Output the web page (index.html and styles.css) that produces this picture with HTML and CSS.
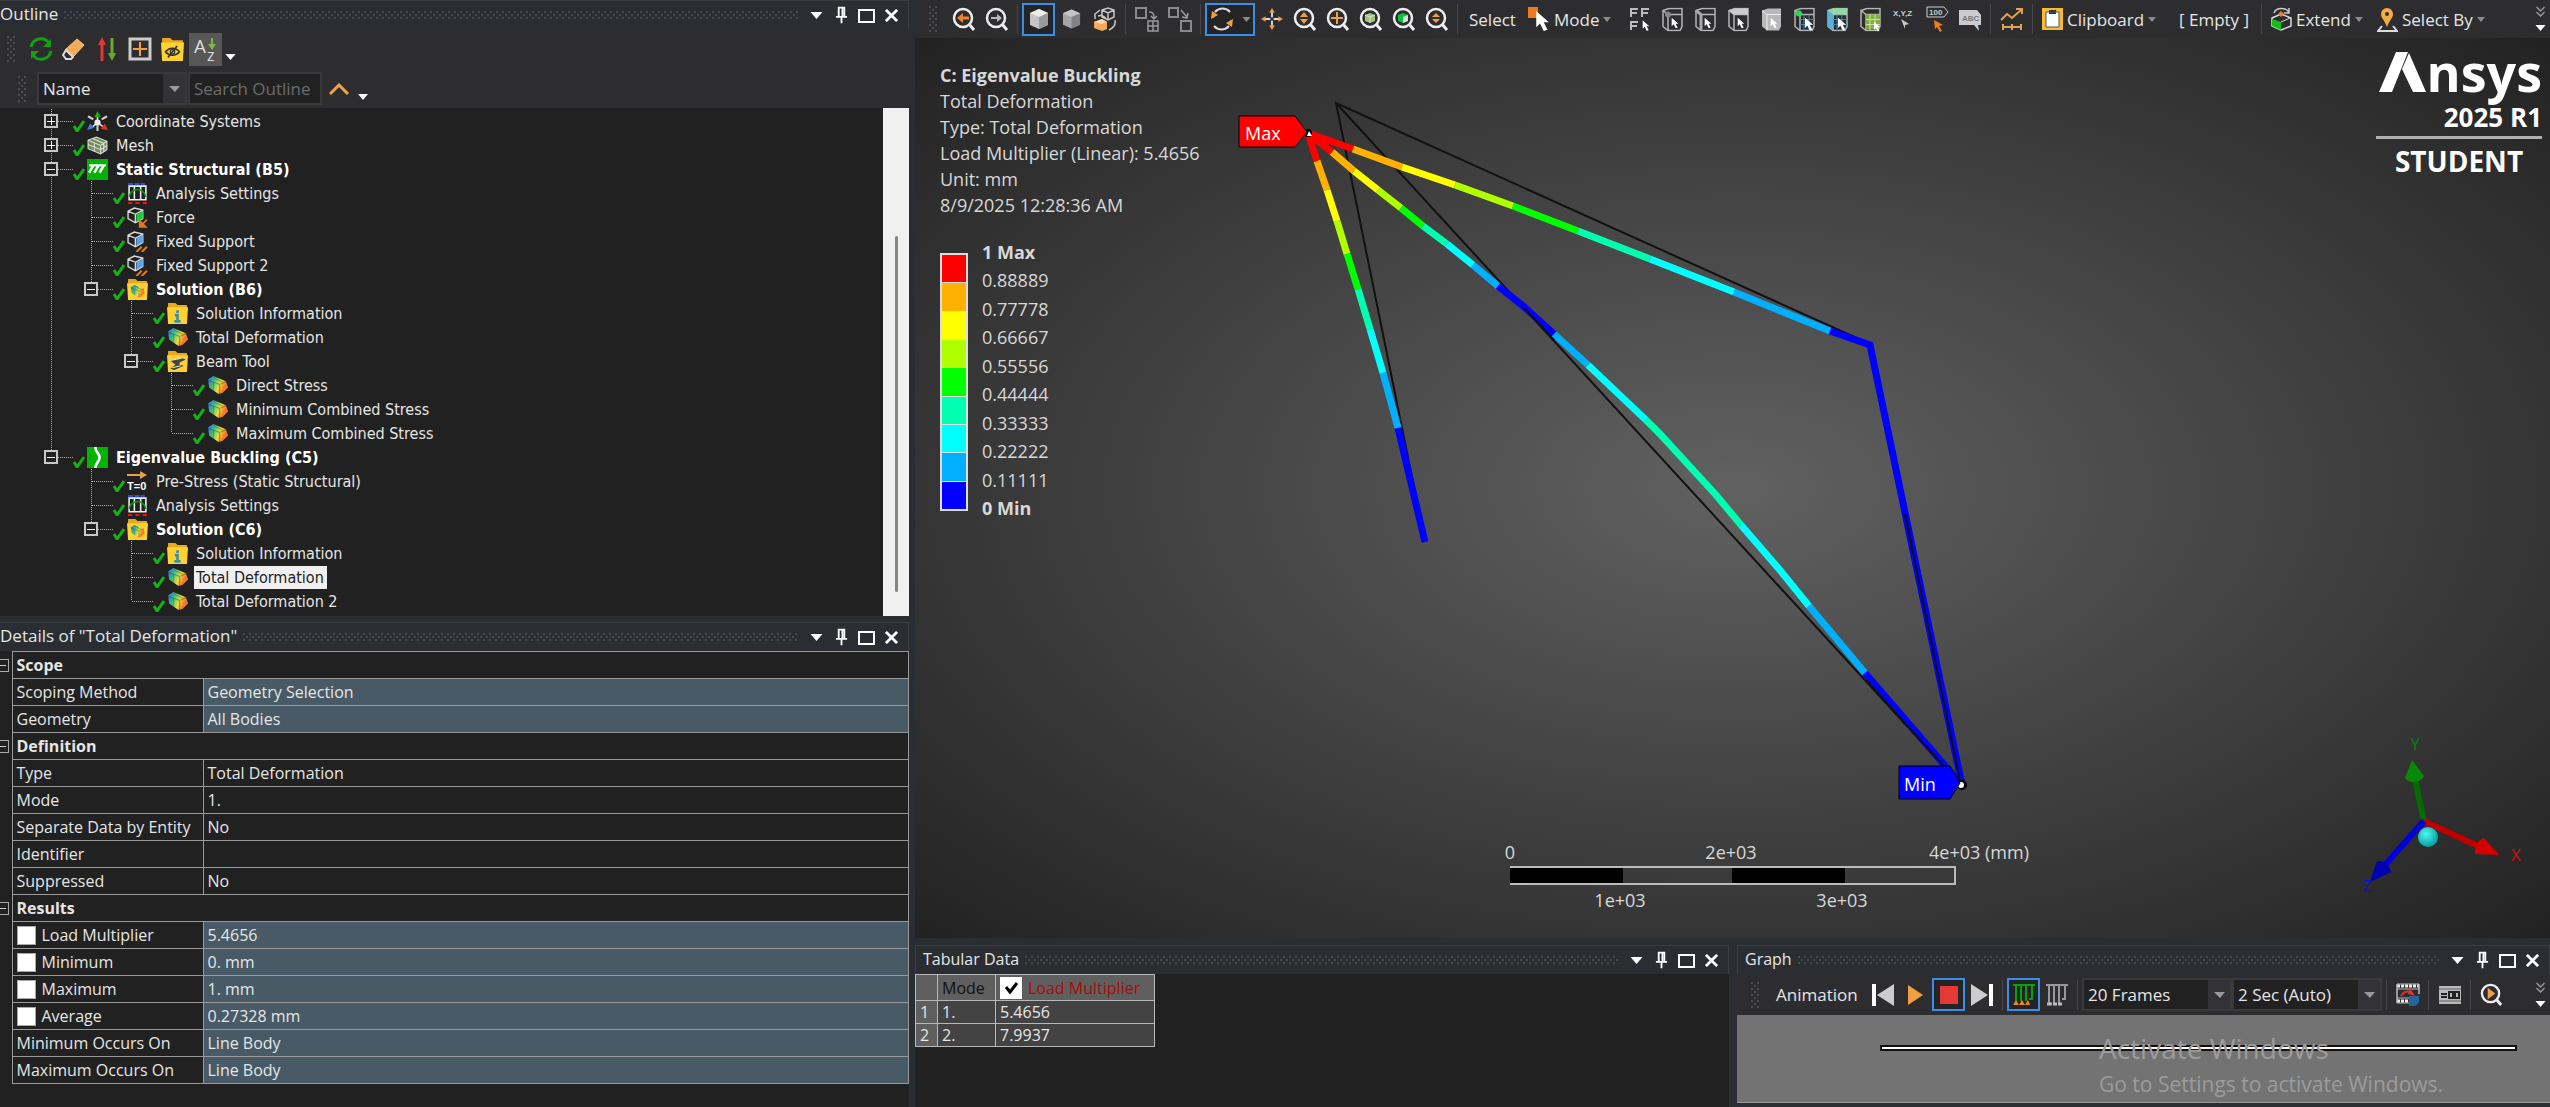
FILE: index.html
```html
<!DOCTYPE html>
<html lang="en">
<head>
  <meta charset="UTF-8">
  <title>Mechanical - Eigenvalue Buckling</title>
  <link rel="stylesheet" href="styles.css">
</head>
<body>
  <!-- shared icons -->
  <svg class="sprite" aria-hidden="true">
    <defs>
      <linearGradient id="rainbow" x1="0" y1="0.2" x2="1" y2="0.6">
        <stop offset="0.05" stop-color="#3579d8"/>
        <stop offset="0.3" stop-color="#3cc47a"/>
        <stop offset="0.6" stop-color="#f0dc3c"/>
        <stop offset="0.85" stop-color="#f5792e"/>
      </linearGradient>
      <radialGradient id="ball" cx="0.4" cy="0.35" r="0.7">
        <stop offset="0" stop-color="#4ff5f5"/>
        <stop offset="1" stop-color="#009a9a"/>
      </radialGradient>
    </defs>
    <symbol id="i-check" viewBox="0 0 12 13"><path d="M1 7l3 5 7-10" fill="none" stroke="#12b312" stroke-width="3"/></symbol>
    <symbol id="i-coord" viewBox="0 0 20 20"><path d="M10 11l7 5M10 11V4M10 11l-6 5" stroke="#ddd" stroke-width="1.5"/><path d="M10 0l3 6H7z" fill="#12b312"/><path d="M20 18l-7-1 4-5z" fill="#e03030"/><path d="M0 18l3-6 4 4z" fill="#3b82d0"/><path d="M1 5l5 3M19 5l-5 3M10 14v5" stroke="#ccc" stroke-width="2"/><circle cx="10" cy="11" r="3" fill="#eee"/></symbol>
    <symbol id="i-mesh" viewBox="0 0 20 20"><path d="M1 5l8-3 10 4v8l-6 4L1 13z" fill="#6f8f55" stroke="#ddd"/><path d="M1 5l12 5 6-4M13 10v8M5 3l11 5v8M7 8v8M1 9l12 5 6-4" fill="none" stroke="#ddd"/></symbol>
    <symbol id="i-static" viewBox="0 0 20 20"><path d="M0 0h20v20H0z" fill="#04b204"/><path d="M2 6h16" stroke="#fff" stroke-width="2"/><path d="M6 6l-4 7M11 6l-4 7M16 6l-4 7" stroke="#fff" stroke-width="2.5"/></symbol>
    <symbol id="i-buckle" viewBox="0 0 20 20"><path d="M0 0h20v20H0z" fill="#04b204"/><path d="M8 0c0 6 4 6 4 10s-4 5-4 10" fill="none" stroke="#fff" stroke-width="2.5"/></symbol>
    <symbol id="i-settings" viewBox="0 0 20 20"><path d="M2 3h16v13H2zM7 3v13M13 3v13" fill="none" stroke="#eee" stroke-width="1.5"/><path d="M2 13c3-9 13-9 16 0" fill="none" stroke="#0a9a0a" stroke-width="1.5"/><path d="M1 1h16" stroke="#2a4fd0" stroke-width="2" stroke-dasharray="5 1"/><path d="M1 19h18" stroke="#f01010" stroke-width="2" stroke-dasharray="4 3"/></symbol>
    <symbol id="i-force" viewBox="0 0 20 20"><path d="M1 4l6-3 8 2v8l-7 4-7-4zM1 4l7 3 7-4M8 7v8" fill="none" stroke="#ddd" stroke-width="1.3"/><path d="M9 7l6-3v7l-6 3z" fill="#12d032"/><path d="M19 12l-5 5M12 19v-6l6 6z" stroke="#e07820" stroke-width="1.5" fill="#e07820"/></symbol>
    <symbol id="i-fixed" viewBox="0 0 20 20"><path d="M1 4l6-3 8 2v8l-7 4-7-4zM1 4l7 3 7-4M8 7v8" fill="none" stroke="#ddd" stroke-width="1.3"/><path d="M9 7l6-3v7l-6 3z" fill="#5aa5e8"/><path d="M9 20l5-5M14 20l5-5" stroke="#e07820" stroke-width="2"/></symbol>
    <symbol id="i-folder" viewBox="0 0 20 20"><path d="M1 0h7l2 2h9v4H1z" fill="#e8a91e"/><path d="M0 4h20l-1 16H1z" fill="#fdd232"/></symbol>
    <symbol id="i-result" viewBox="0 0 20 20"><path d="M1 4l5-3 12 5 2 6-5 5-4 1-9-6z" fill="url(#rainbow)"/><path d="M1 5l11 4 7-3M12 9v9M6 7v8M6 2l9 5" fill="none" stroke="#1f3a2a" stroke-opacity="0.4"/></symbol>
    <symbol id="i-solution" viewBox="0 0 20 20"><use href="#i-folder"/><use href="#i-result" x="3" y="5" width="14" height="14"/></symbol>
    <symbol id="i-info" viewBox="0 0 20 20"><use href="#i-folder"/><path d="M10 7v2.500M7.500 11.500H10V17M7 17.500h6" fill="none" stroke="#3c8f9c" stroke-width="2.500"/></symbol>
    <symbol id="i-beam" viewBox="0 0 20 20"><use href="#i-folder"/><path d="M3 9l11-2 4 1-6 3v2l4 1-9 4-4-1 5-4z" fill="#444"/><path d="M3 9l11-2M5 16l8-2" stroke="#ddd"/></symbol>

    <symbol id="i-drop" viewBox="0 0 12 7"><path d="M0 0h12L6 7z" fill="#fff"/></symbol>
    <symbol id="i-caret" viewBox="0 0 8 5"><path d="M0 0h8L4 5z" fill="#8a8a8a"/></symbol>
    <symbol id="i-pin" viewBox="0 0 14 18"><path d="M4 1h6v10H4zM1 11h12M7 11v7" fill="none" stroke="#fff" stroke-width="2"/><path d="M8 1v10" stroke="#fff" stroke-width="2"/></symbol>
    <symbol id="i-max" viewBox="0 0 17 15"><path d="M1 2h15v12H1z" fill="none" stroke="#fff" stroke-width="2"/></symbol>
    <symbol id="i-close" viewBox="0 0 14 14"><path d="M1 1l12 12M13 1L1 13" stroke="#fff" stroke-width="3"/></symbol>
    <symbol id="i-more" viewBox="0 0 10 26"><path d="M1 1l4 4 4-4M1 6l4 4 4-4" fill="none" stroke="#999" stroke-width="1.500"/><path d="M0 19h10l-5 6z" fill="#fff"/></symbol>

    <symbol id="i-lens" viewBox="0 0 24 24"><circle cx="11" cy="11" r="9" fill="none" stroke="#eee" stroke-width="2.500"/><path d="M17 17l5 6" stroke="#eee" stroke-width="3"/></symbol>
    <symbol id="i-cube" viewBox="0 0 20 20"><path d="M1 4l9-4 9 4v12l-9 4-9-4z" fill="#c4c4c4"/><path d="M1 4l9-4 9 4-9 4z" fill="#ececec"/><path d="M10 8l9-4v12l-9 4z" fill="#999"/></symbol>
    <symbol id="i-cubesel" viewBox="0 0 24 24"><path d="M2 3l6-2h13v18l-2 4H7l-5-4z" fill="none" stroke="#b5b5b5" stroke-width="1.500"/><path d="M2 3l5 4h14M7 7v16" fill="none" stroke="#b5b5b5" stroke-width="1.500"/></symbol>
    <symbol id="i-arrow" viewBox="0 0 12 16"><path d="M1 0v13l3-3 3 6 3-1-3-6h4z" fill="#fff"/></symbol>
  </svg>

  <div class="app">
    <div class="side">
      <section class="outline">
        <header class="titlebar">
          <h2>Outline</h2><span class="dots"></span>
          <button aria-label="Menu"><svg width="13" height="7"><use href="#i-drop"/></svg></button>
          <button aria-label="Pin"><svg width="13" height="18"><use href="#i-pin"/></svg></button>
          <button aria-label="Maximize"><svg width="17" height="15"><use href="#i-max"/></svg></button>
          <button aria-label="Close"><svg width="13" height="13"><use href="#i-close"/></svg></button>
        </header>
        <div class="tools">
          <span class="grip"></span>
          <button aria-label="Refresh"><svg width="24" height="24" viewBox="0 0 24 24"><path d="M2 10a10 10 0 0 1 18-4M22 14a10 10 0 0 1-18 4" fill="none" stroke="#12a012" stroke-width="3"/><path d="M22 2v8h-8zM2 22v-8h8z" fill="#12a012"/></svg></button>
          <button aria-label="Clear"><svg width="24" height="24" viewBox="0 0 24 24"><path d="M15 2l7 6-11 12-8-7z" fill="#f3ab55" stroke="#f6c78c"/><path d="M4 13l7 7-2 2-5 0-3-4z" fill="none" stroke="#ddd" stroke-width="2"/></svg></button>
          <button aria-label="Sort"><svg width="20" height="24" viewBox="0 0 20 24"><path d="M5 24V6" stroke="#e23535" stroke-width="3"/><path d="M5 0l4 8H1z" fill="#e23535"/><path d="M15 1v17" stroke="#6aa832" stroke-width="3"/><path d="M15 24l4-8h-8z" fill="#6aa832"/></svg></button>
          <button aria-label="Expand all"><svg width="24" height="24" viewBox="0 0 24 24"><path d="M2 2h20v20H2z" fill="none" stroke="#ccc" stroke-width="3"/><path d="M12 5v14M5 12h14" stroke="#f0a040" stroke-width="2"/></svg></button>
          <button aria-label="Hide folders"><svg width="23" height="23" viewBox="0 0 20 20"><use href="#i-folder"/><path d="M4 12c3-4 9-4 12 0-3 4-9 4-12 0zM6 17l8-10" fill="none" stroke="#333" stroke-width="1.500"/><circle cx="10" cy="12" r="2" fill="none" stroke="#333"/></svg></button>
          <button class="sort-az" aria-label="Sort A to Z"><svg width="33" height="33" viewBox="0 0 33 33"><text x="5" y="20" class="az-a">A</text><text x="18" y="28" class="az-z">z</text><path d="M23 5v8" stroke="#7cb848" stroke-width="2"/><path d="M19 11h8l-4 6z" fill="#7cb848"/></svg></button>
          <button class="overflow" aria-label="More"><svg width="11" height="6"><use href="#i-drop"/></svg></button>
        </div>
        <div class="search">
          <span class="grip"></span>
          <select aria-label="Search by"><option>Name</option></select>
          <input type="text" placeholder="Search Outline" aria-label="Search Outline">
          <button aria-label="Collapse"><svg width="20" height="12" viewBox="0 0 20 12"><path d="M1 11l9-9 9 9" fill="none" stroke="#f0a445" stroke-width="3"/></svg></button>
          <button class="overflow" aria-label="More"><svg width="10" height="6"><use href="#i-drop"/></svg></button>
        </div>
        <div class="tree-box">
          <ul class="tree">
            <li><div class="row"><button class="toggle plus" aria-label="Expand"></button><svg class="check"><use href="#i-check"/></svg><svg class="icon"><use href="#i-coord"/></svg><span>Coordinate Systems</span></div></li>
            <li><div class="row"><button class="toggle plus" aria-label="Expand"></button><svg class="check"><use href="#i-check"/></svg><svg class="icon"><use href="#i-mesh"/></svg><span>Mesh</span></div></li>
            <li>
              <div class="row bold"><button class="toggle" aria-label="Collapse"></button><svg class="check"><use href="#i-check"/></svg><svg class="icon"><use href="#i-static"/></svg><span>Static Structural (B5)</span></div>
              <ul>
                <li><div class="row leaf"><svg class="check"><use href="#i-check"/></svg><svg class="icon"><use href="#i-settings"/></svg><span>Analysis Settings</span></div></li>
                <li><div class="row leaf"><svg class="check"><use href="#i-check"/></svg><svg class="icon"><use href="#i-force"/></svg><span>Force</span></div></li>
                <li><div class="row leaf"><svg class="check"><use href="#i-check"/></svg><svg class="icon"><use href="#i-fixed"/></svg><span>Fixed Support</span></div></li>
                <li><div class="row leaf"><svg class="check"><use href="#i-check"/></svg><svg class="icon"><use href="#i-fixed"/></svg><span>Fixed Support 2</span></div></li>
                <li>
                  <div class="row bold"><button class="toggle" aria-label="Collapse"></button><svg class="check"><use href="#i-check"/></svg><svg class="icon"><use href="#i-solution"/></svg><span>Solution (B6)</span></div>
                  <ul>
                    <li><div class="row leaf"><svg class="check"><use href="#i-check"/></svg><svg class="icon"><use href="#i-info"/></svg><span>Solution Information</span></div></li>
                    <li><div class="row leaf"><svg class="check"><use href="#i-check"/></svg><svg class="icon"><use href="#i-result"/></svg><span>Total Deformation</span></div></li>
                    <li>
                      <div class="row"><button class="toggle" aria-label="Collapse"></button><svg class="check"><use href="#i-check"/></svg><svg class="icon"><use href="#i-beam"/></svg><span>Beam Tool</span></div>
                      <ul>
                        <li><div class="row leaf"><svg class="check"><use href="#i-check"/></svg><svg class="icon"><use href="#i-result"/></svg><span>Direct Stress</span></div></li>
                        <li><div class="row leaf"><svg class="check"><use href="#i-check"/></svg><svg class="icon"><use href="#i-result"/></svg><span>Minimum Combined Stress</span></div></li>
                        <li><div class="row leaf"><svg class="check"><use href="#i-check"/></svg><svg class="icon"><use href="#i-result"/></svg><span>Maximum Combined Stress</span></div></li>
                      </ul>
                    </li>
                  </ul>
                </li>
              </ul>
            </li>
            <li>
              <div class="row bold"><button class="toggle" aria-label="Collapse"></button><svg class="check"><use href="#i-check"/></svg><svg class="icon"><use href="#i-buckle"/></svg><span>Eigenvalue Buckling (C5)</span></div>
              <ul>
                <li><div class="row leaf"><svg class="check"><use href="#i-check"/></svg><svg class="icon" viewBox="0 0 21 21"><path d="M0 4h14" stroke="#e8a04a" stroke-width="2"/><path d="M13 0l7 4-7 4z" fill="#e8a04a"/><text x="0" y="19" class="t0">T=0</text></svg><span>Pre-Stress (Static Structural)</span></div></li>
                <li><div class="row leaf"><svg class="check"><use href="#i-check"/></svg><svg class="icon"><use href="#i-settings"/></svg><span>Analysis Settings</span></div></li>
                <li>
                  <div class="row bold"><button class="toggle" aria-label="Collapse"></button><svg class="check"><use href="#i-check"/></svg><svg class="icon"><use href="#i-solution"/></svg><span>Solution (C6)</span></div>
                  <ul>
                    <li><div class="row leaf"><svg class="check"><use href="#i-check"/></svg><svg class="icon"><use href="#i-info"/></svg><span>Solution Information</span></div></li>
                    <li><div class="row leaf selected"><svg class="check"><use href="#i-check"/></svg><svg class="icon"><use href="#i-result"/></svg><span>Total Deformation</span></div></li>
                    <li><div class="row leaf"><svg class="check"><use href="#i-check"/></svg><svg class="icon"><use href="#i-result"/></svg><span>Total Deformation 2</span></div></li>
                  </ul>
                </li>
              </ul>
            </li>
          </ul>
          <div class="scrollbar"><span class="thumb"></span></div>
        </div>
      </section>

      <section class="details">
        <header class="titlebar">
          <h2>Details of "Total Deformation"</h2><span class="dots"></span>
          <button aria-label="Menu"><svg width="13" height="7"><use href="#i-drop"/></svg></button>
          <button aria-label="Pin"><svg width="13" height="18"><use href="#i-pin"/></svg></button>
          <button aria-label="Maximize"><svg width="17" height="15"><use href="#i-max"/></svg></button>
          <button aria-label="Close"><svg width="13" height="13"><use href="#i-close"/></svg></button>
        </header>
        <table class="props">
          <colgroup><col class="c-fold"><col class="c-name"><col></colgroup>
          <tr><td class="fold"><button aria-label="Collapse Scope"></button></td><th colspan="2">Scope</th></tr>
          <tr><td class="fold"></td><td>Scoping Method</td><td class="ro">Geometry Selection</td></tr>
          <tr><td class="fold"></td><td>Geometry</td><td class="ro">All Bodies</td></tr>
          <tr><td class="fold"><button aria-label="Collapse Definition"></button></td><th colspan="2">Definition</th></tr>
          <tr><td class="fold"></td><td>Type</td><td>Total Deformation</td></tr>
          <tr><td class="fold"></td><td>Mode</td><td>1.</td></tr>
          <tr><td class="fold"></td><td>Separate Data by Entity</td><td>No</td></tr>
          <tr><td class="fold"></td><td>Identifier</td><td></td></tr>
          <tr><td class="fold"></td><td>Suppressed</td><td>No</td></tr>
          <tr><td class="fold"><button aria-label="Collapse Results"></button></td><th colspan="2">Results</th></tr>
          <tr><td class="fold"></td><td><label><input type="checkbox">Load Multiplier</label></td><td class="ro">5.4656</td></tr>
          <tr><td class="fold"></td><td><label><input type="checkbox">Minimum</label></td><td class="ro">0. mm</td></tr>
          <tr><td class="fold"></td><td><label><input type="checkbox">Maximum</label></td><td class="ro">1. mm</td></tr>
          <tr><td class="fold"></td><td><label><input type="checkbox">Average</label></td><td class="ro">0.27328 mm</td></tr>
          <tr><td class="fold"></td><td>Minimum Occurs On</td><td class="ro">Line Body</td></tr>
          <tr><td class="fold"></td><td>Maximum Occurs On</td><td class="ro">Line Body</td></tr>
        </table>
      </section>
    </div>

    <div class="main">
      <nav class="toolbar">
        <span class="grip"></span>
        <button aria-label="Previous view"><svg width="24" height="24" viewBox="0 0 24 24"><use href="#i-lens"/><path d="M17 11h-7" stroke="#f08030" stroke-width="3"/><path d="M5 11l6-5v10z" fill="#f08030"/></svg></button>
        <button aria-label="Next view"><svg width="24" height="24" viewBox="0 0 24 24"><use href="#i-lens"/><path d="M6 11h6" stroke="#bbb" stroke-width="2"/><path d="M17 11l-5-4v8z" fill="#bbb"/></svg></button>
        <i class="sep"></i>
        <button class="on" aria-label="Shaded exterior and edges"><svg width="20" height="20"><use href="#i-cube"/></svg></button>
        <button class="dim" aria-label="Shaded exterior"><svg width="19" height="20"><use href="#i-cube"/></svg></button>
        <button aria-label="Rotate cubes"><svg width="24" height="25" viewBox="0 0 24 25"><path d="M9 3l6-2 6 2v7l-6 3-6-3zM9 3l6 3 6-3M15 6v7M2 12V7l5-4M22 13c1 5-2 8-6 10M5 9c3-1 6 0 8 3" fill="none" stroke="#c5c5c5" stroke-width="1.500"/><path d="M1 15l8-3 5 3v7l-5 2-8-3z" fill="#f3a85a"/><path d="M1 15l8-3 5 3-5 2z" fill="#fbd9b0"/></svg></button>
        <i class="sep"></i>
        <button aria-label="Show mesh"><svg width="24" height="25" viewBox="0 0 24 25"><path d="M1 1h10v10H1z" fill="none" stroke="#8a8a8a" stroke-width="2"/><path d="M14 5c5 0 5 3 5 6M16 9l3 3 3-3M13 14h10v10H13zM18 14v10M13 19h10" fill="none" stroke="#9a9a9a" stroke-width="1.500"/></svg></button>
        <button aria-label="Show body"><svg width="24" height="25" viewBox="0 0 24 25"><path d="M1 1h9v9H1zM13 14h10v10H13z" fill="none" stroke="#8a8a8a" stroke-width="2"/><path d="M13 3l6 7M20 6l-1 5-5-1" fill="none" stroke="#9a9a9a" stroke-width="1.500"/></svg></button>
        <i class="sep"></i>
        <button class="on wide" aria-label="Rotate"><svg width="24" height="24" viewBox="0 0 24 24"><path d="M5 5a10 10 0 0 1 15 0M19 19a10 10 0 0 1-15 0" fill="none" stroke="#ddd" stroke-width="2"/><path d="M3 11l0-6M21 13l0 6" stroke="#ddd" stroke-width="1"/><path d="M1 12l1-8 6 4zM23 12l-1 8-6-4z" fill="#f0a040"/></svg><svg width="9" height="5"><use href="#i-caret"/></svg></button>
        <button aria-label="Pan"><svg width="22" height="24" viewBox="0 0 24 24"><path d="M12 3v18M3 12h18" stroke="#ddd" stroke-width="2"/><path d="M12 0l3 5H9zM12 24l3-5H9zM0 12l5-3v6zM24 12l-5-3v6z" fill="#f0a040"/><circle cx="12" cy="12" r="2" fill="#2d2d2f"/></svg></button>
        <button aria-label="Zoom"><svg width="24" height="24" viewBox="0 0 24 24"><use href="#i-lens"/><path d="M11 5l4 5H7zM11 17l4-5H7z" fill="#f0a040"/></svg></button>
        <button aria-label="Box zoom"><svg width="24" height="24" viewBox="0 0 24 24"><use href="#i-lens"/><path d="M11 5v12M5 11h12" stroke="#f0a040" stroke-width="2"/></svg></button>
        <button aria-label="Zoom to fit"><svg width="24" height="24" viewBox="0 0 24 24"><use href="#i-lens"/><path d="M6 8l5-2 5 2v6l-5 2-5-2z" fill="#9cc878"/><path d="M6 8l5 2 5-2M11 10v6" fill="none" stroke="#ddd"/></svg></button>
        <button aria-label="Zoom to selection"><svg width="24" height="24" viewBox="0 0 24 24"><use href="#i-lens"/><path d="M6 8l5-2 5 2v6l-5 2-5-2z" fill="#0cc43c"/><path d="M11 10l5-2v6l-5 2z" fill="#ddd"/></svg></button>
        <button aria-label="Magnifier"><svg width="24" height="24" viewBox="0 0 24 24"><use href="#i-lens"/><path d="M11 6l4 4H7zM11 16l4-4H7z" fill="#f0a040"/></svg></button>
        <i class="sep"></i>
        <span class="label">Select</span>
        <button class="text mode"><svg width="22" height="24" viewBox="0 0 22 24"><path d="M0 0h10v11H0z" fill="#f07820"/><use href="#i-arrow" x="7" y="4" width="15" height="20"/></svg>Mode<svg class="tri" width="8" height="5"><use href="#i-caret"/></svg></button>
        <button aria-label="Smart select"><svg width="24" height="24" viewBox="0 0 24 24"><path d="M3 1v9M3 2h7M3 6h6M14 1v9M14 2h7M14 6h6M3 14v9M3 15h7M3 19h6" stroke="#bbb" stroke-width="2"/><use href="#i-arrow" x="14" y="13" width="8" height="11"/></svg></button>
        <button aria-label="Vertex"><svg width="24" height="25" viewBox="0 0 24 24"><use href="#i-cubesel"/><circle cx="7" cy="7" r="3" fill="#888"/><use href="#i-arrow" x="10" y="10" width="8" height="11"/></svg></button>
        <button aria-label="Edge"><svg width="24" height="25" viewBox="0 0 24 24"><use href="#i-cubesel"/><path d="M2 3l5 4v15" fill="none" stroke="#aaa" stroke-width="3"/><use href="#i-arrow" x="10" y="10" width="8" height="11"/></svg></button>
        <button aria-label="Face"><svg width="24" height="25" viewBox="0 0 24 24"><use href="#i-cubesel"/><path d="M2 3l6-2h13v6H7z" fill="#ccc"/><use href="#i-arrow" x="10" y="10" width="8" height="11"/></svg></button>
        <button aria-label="Body"><svg width="24" height="25" viewBox="0 0 24 24"><path d="M2 3l6-2h13v18l-2 4H7l-5-4z" fill="#b8b8b8"/><path d="M2 3l5 4h14M7 7v16" fill="none" stroke="#eee"/><use href="#i-arrow" x="10" y="10" width="8" height="11"/></svg></button>
        <button aria-label="Node"><svg width="24" height="25" viewBox="0 0 24 24"><use href="#i-cubesel"/><path d="M11 7v16M16 7v16M7 12h14M7 17h14" stroke="#2f86b8"/><circle cx="6" cy="6" r="3" fill="#20e050"/><use href="#i-arrow" x="11" y="10" width="10" height="13"/></svg></button>
        <button aria-label="Element face"><svg width="24" height="25" viewBox="0 0 24 24"><use href="#i-cubesel"/><path d="M2 3l6-2h13v6H7z" fill="#8fdca0"/><path d="M2 3l5 4v16l-5-4z" fill="#5ab0d8"/><path d="M11 7v16M16 7v16M7 12h14M7 17h14" stroke="#2f86b8"/><use href="#i-arrow" x="11" y="10" width="10" height="13"/></svg></button>
        <button aria-label="Element"><svg width="24" height="25" viewBox="0 0 24 24"><use href="#i-cubesel"/><path d="M7 7h13v15H7z" fill="#7fae3c"/><path d="M11 7v16M16 7v16M7 12h14M7 17h14" stroke="#cfe0b0"/><use href="#i-arrow" x="14" y="14" width="8" height="10"/></svg></button>
        <button aria-label="Coordinates"><svg width="24" height="24" viewBox="0 0 24 24"><text x="1" y="9" class="tiny">X,Y,Z</text><path d="M9 12l8 5-4 1v4z" fill="#ccc"/></svg></button>
        <button aria-label="Hit point"><svg width="24" height="26" viewBox="0 0 24 26"><path d="M2 1h17l4 5-4 5H2z" fill="none" stroke="#ccc"/><text x="4" y="9" class="tiny">100</text><path d="M9 14l9 5-4 1 3 5-2 1-3-5-2 2z" fill="#f08020"/></svg></button>
        <button aria-label="Annotation"><svg width="24" height="24" viewBox="0 0 24 24"><path d="M1 3h18l4 5v10h-3l1 6-5-6H1z" fill="#ccc"/><text x="4" y="14" class="tiny dark">ABC</text></svg></button>
        <i class="sep"></i>
        <button aria-label="Chart"><svg width="24" height="24" viewBox="0 0 24 24"><path d="M1 13l6-6 5 4 9-8M16 2h6v5M2 20h20M3 17v6M12 17v6M21 17v6" fill="none" stroke="#e8a04a" stroke-width="2"/></svg></button>
        <i class="sep"></i>
        <button class="text clip"><svg width="21" height="22" viewBox="0 0 21 22"><path d="M0 0h21v22H0z" fill="#f7bb33"/><path d="M4 4h13v15H4z" fill="#fff"/><path d="M7 2h7v4H7z" fill="#333"/><path d="M4 4h13v15H4z" fill="none" stroke="#555"/></svg>Clipboard<svg class="tri" width="8" height="5"><use href="#i-caret"/></svg></button>
        <span class="label empty">[ Empty ]</span>
        <i class="sep"></i>
        <button class="text ext"><svg width="21" height="24" viewBox="0 0 21 24"><path d="M1 11l9-4 10 4v8l-10 4-9-4z" fill="none" stroke="#ddd" stroke-width="1.500"/><path d="M1 12l9 3v8l-9-4z" fill="#12c012"/><path d="M10 15l9-4" stroke="#ddd"/><path d="M3 6c2-6 13-6 15 0M18 1v5h-5" fill="none" stroke="#ccc" stroke-width="1.500"/><path d="M10 4l3 3-3 3-3-3z" fill="#f08030"/></svg>Extend<svg class="tri" width="8" height="5"><use href="#i-caret"/></svg></button>
        <button class="text"><svg width="21" height="25" viewBox="0 0 21 25"><path d="M10 1a6 6 0 0 1 6 6c0 4-4 7-6 13C8 14 4 11 4 7a6 6 0 0 1 6-6z" fill="#f5ab40"/><circle cx="10" cy="7" r="2" fill="#2d2d2f"/><path d="M5 19l-4 5h19l-4-5" fill="none" stroke="#ddd" stroke-width="2"/></svg>Select By<svg class="tri" width="8" height="5"><use href="#i-caret"/></svg></button>
        <button class="more" aria-label="More tools"><svg width="11" height="26"><use href="#i-more"/></svg></button>
      </nav>

      <div class="viewport">
        <svg class="scene" viewBox="915 38 1635 900" preserveAspectRatio="xMidYMid meet">
          <!-- undeformed frame -->
          <g class="wire">
            <path d="M1870 344L1336 103L1425 541M1336 103L1961 785"/>
          </g>
          <!-- deformed beams, one line per contour band -->
          <g class="beam">
            <path class="b9" d="M1308 133L1317 161"/>
            <path class="b8" d="M1317 161L1327 190"/>
            <path class="b7" d="M1327 190L1337 221"/>
            <path class="b6" d="M1337 221L1347 254"/>
            <path class="b5" d="M1347 254L1358 289"/>
            <path class="b4" d="M1358 289L1370 329"/>
            <path class="b3" d="M1370 329L1383 373"/>
            <path class="b2" d="M1383 373L1398 428"/>
            <path class="b1" d="M1398 428L1425 542"/>

            <path class="b9" d="M1308 133L1332 152"/>
            <path class="b8" d="M1332 152L1354 171"/>
            <path class="b7" d="M1354 171L1378 190"/>
            <path class="b6" d="M1378 190L1401 208"/>
            <path class="b5" d="M1401 208L1423 226"/>
            <path class="b4" d="M1423 226L1447 244"/>
            <path class="b3" d="M1447 244L1473 265"/>
            <path class="b2" d="M1473 265L1498 286"/>
            <path class="b1" d="M1498 286L1523 306L1554 334"/>
            <path class="b2" d="M1554 334L1588 365"/>
            <path class="b3" d="M1588 365L1646 420"/>
            <path class="b4" d="M1646 420L1660 434L1716 495L1741 525"/>
            <path class="b3" d="M1741 525L1779 569L1809 606"/>
            <path class="b2" d="M1809 606L1865 673"/>
            <path class="b1" d="M1865 673L1960 783"/>

            <path class="b9" d="M1308 133L1353 149"/>
            <path class="b8" d="M1353 149L1402 167"/>
            <path class="b7" d="M1402 167L1455 185"/>
            <path class="b6" d="M1455 185L1513 206"/>
            <path class="b5" d="M1513 206L1578 231"/>
            <path class="b4" d="M1578 231L1650 259"/>
            <path class="b3" d="M1650 259L1734 292"/>
            <path class="b2" d="M1734 292L1830 331"/>
            <path class="b1" d="M1830 331L1870 345L1962 785"/>
          </g>
          <path class="wire" d="M1905 514L1961 785M1524 308L1554 340M1866 680L1961 785"/>
          <circle cx="1308" cy="133" r="4" fill="#000"/>
          <path d="M1309 131l3 5h-5z" fill="#fff"/>
          <circle cx="1962" cy="785" r="5" fill="#000"/>
          <circle cx="1961" cy="785" r="3" fill="#fff"/>
          <path d="M1239 116h56l12 16-12 15h-56z" fill="#f00" stroke="#000"/>
          <text x="1245" y="140">Max</text>
          <path d="M1899 766h51l10 17-10 16h-51z" fill="#00f" stroke="#000"/>
          <text x="1904" y="791">Min</text>

          <!-- ruler -->
          <path d="M1510 868h113v16h-113zM1732 868h113v16h-113z" fill="#000"/>
          <path d="M1510 867h445v17h-445" fill="none" stroke="#bbb" stroke-width="2"/>
          <g class="ruler">
            <text x="1510" y="859">0</text>
            <text x="1731" y="859">2e+03</text>
            <text x="1979" y="859">4e+03 (mm)</text>
            <text x="1620" y="907">1e+03</text>
            <text x="1842" y="907">3e+03</text>
          </g>

          <!-- triad -->
          <path d="M2424 821L2415 780" stroke="#056b05" stroke-width="6"/>
          <path d="M2412 760l12 16c-3 7-15 8-19 2z" fill="#078a07"/>
          <path d="M2424 821L2480 847" stroke="#c00000" stroke-width="6"/>
          <path d="M2499 855l-15-17c-6 2-10 10-9 16z" fill="#d60000"/>
          <path d="M2424 821L2384 866" stroke="#0000d8" stroke-width="6"/>
          <path d="M2370 882l7-21c7-1 13 5 14 11z" fill="#0000b0"/>
          <circle cx="2428" cy="837" r="10" fill="url(#ball)"/>
          <g class="axis">
            <text x="2415" y="750" class="ax-y">Y</text>
            <text x="2516" y="861" class="ax-x">X</text>
            <text x="2367" y="892" class="ax-z">Z</text>
          </g>
        </svg>
        <div class="info">
          <strong>C: Eigenvalue Buckling</strong>
          <p>Total Deformation</p>
          <p>Type: Total Deformation</p>
          <p>Load Multiplier (Linear): 5.4656</p>
          <p>Unit: mm</p>
          <p>8/9/2025 12:28:36 AM</p>
          <div class="legend">
            <div class="bands"><i class="b9"></i><i class="b8"></i><i class="b7"></i><i class="b6"></i><i class="b5"></i><i class="b4"></i><i class="b3"></i><i class="b2"></i><i class="b1"></i></div>
            <ul>
              <li><b>1 Max</b></li>
              <li>0.88889</li>
              <li>0.77778</li>
              <li>0.66667</li>
              <li>0.55556</li>
              <li>0.44444</li>
              <li>0.33333</li>
              <li>0.22222</li>
              <li>0.11111</li>
              <li><b>0 Min</b></li>
            </ul>
          </div>
        </div>
        <div class="brand">
          <div class="name"><svg width="48" height="40" viewBox="0 0 48 40"><path d="M17 0h12L13 40H0zM30 1l17 39H34L23 17z" fill="#fff"/></svg>nsys</div>
          <div class="version">2025 R1</div>
          <div class="edition">STUDENT</div>
        </div>
      </div>

      <div class="bottom">
        <section class="tabular">
          <header class="titlebar">
            <h2>Tabular Data</h2><span class="dots"></span>
            <button aria-label="Menu"><svg width="13" height="7"><use href="#i-drop"/></svg></button>
            <button aria-label="Pin"><svg width="13" height="18"><use href="#i-pin"/></svg></button>
            <button aria-label="Maximize"><svg width="17" height="15"><use href="#i-max"/></svg></button>
            <button aria-label="Close"><svg width="13" height="13"><use href="#i-close"/></svg></button>
          </header>
          <table class="data">
            <tr><th class="n"></th><th class="m">Mode</th><th class="v"><label><input type="checkbox" checked>Load Multiplier</label></th></tr>
            <tr><th class="n">1</th><td>1.</td><td>5.4656</td></tr>
            <tr><th class="n">2</th><td>2.</td><td>7.9937</td></tr>
          </table>
        </section>

        <section class="graph">
          <header class="titlebar">
            <h2>Graph</h2><span class="dots"></span>
            <button aria-label="Menu"><svg width="13" height="7"><use href="#i-drop"/></svg></button>
            <button aria-label="Pin"><svg width="13" height="18"><use href="#i-pin"/></svg></button>
            <button aria-label="Maximize"><svg width="17" height="15"><use href="#i-max"/></svg></button>
            <button aria-label="Close"><svg width="13" height="13"><use href="#i-close"/></svg></button>
          </header>
          <div class="player">
            <span class="grip"></span>
            <span class="label">Animation</span>
            <button aria-label="First frame"><svg width="22" height="22" viewBox="0 0 22 22"><path d="M0 0h4v22H0z" fill="#fff"/><path d="M22 0v22L5 11z" fill="#ccc"/></svg></button>
            <button aria-label="Play"><svg width="15" height="20" viewBox="0 0 15 20"><path d="M0 0l15 10L0 20z" fill="#f0a040"/></svg></button>
            <button class="on" aria-label="Stop"><svg width="18" height="18" viewBox="0 0 18 18"><path d="M0 0h18v18H0z" fill="#e53935"/></svg></button>
            <button aria-label="Last frame"><svg width="22" height="22" viewBox="0 0 22 22"><path d="M18 0h4v22h-4z" fill="#fff"/><path d="M0 0v22l17-11z" fill="#ccc"/></svg></button>
            <i class="sep"></i>
            <button class="on" aria-label="Distributed"><svg width="22" height="22" viewBox="0 0 22 22"><path d="M0 1h22M3 1v16M8 1v16M13 1v16M19 1v14h-3" fill="none" stroke="#0aa00a" stroke-width="2"/><path d="M0 21l3-5 3 5 3-5 3 5 3-5 2 5z" fill="#f08020"/></svg></button>
            <button aria-label="Result sets"><svg width="22" height="22" viewBox="0 0 22 22"><path d="M0 1h22M3 1v18M8 1v18M13 1v18M19 1v14h-3" fill="none" stroke="#999" stroke-width="2"/><path d="M1 20h5M7 20h4M12 20h4" stroke="#bbb" stroke-width="3"/></svg></button>
            <i class="sep"></i>
            <select aria-label="Frames"><option>20 Frames</option></select>
            <select aria-label="Duration"><option>2 Sec (Auto)</option></select>
            <i class="sep"></i>
            <button aria-label="Export video"><svg width="24" height="24" viewBox="0 0 24 24"><path d="M1 1h22M1 6h22M1 15h12M1 20h12" stroke="#bbb"/><path d="M1 3h22M1 18h12" stroke="#eee" stroke-width="3" stroke-dasharray="3 1"/><path d="M1 1v19M23 1v10" stroke="#bbb" stroke-width="1.5"/><path d="M5 13c3-5 6-5 10-4" fill="none" stroke="#e03030" stroke-width="2"/><path d="M14 5l5 8-7-2z" fill="#e03030"/><path d="M13 13h10v7l-4 3h-6z" fill="#27649a"/></svg></button>
            <i class="sep"></i>
            <button aria-label="Update contour"><svg width="22" height="18" viewBox="0 0 22 18"><path d="M0 0h22v18H0z" fill="#b8b8b8"/><path d="M0 3h22M0 15h22" stroke="#666"/><path d="M2 8h6M2 11h6" stroke="#222" stroke-width="2"/><path d="M10 6h4v6h-4zM16 6h4v6h-4z" fill="none" stroke="#222" stroke-width="2"/></svg></button>
            <i class="sep"></i>
            <button aria-label="Zoom graph"><svg width="23" height="23" viewBox="0 0 24 24"><use href="#i-lens"/><path d="M8 5l8 6-8 6z" fill="#f0a040"/></svg></button>
            <button class="more" aria-label="More"><svg width="11" height="26"><use href="#i-more"/></svg></button>
          </div>
          <div class="timeline">
            <div class="track"></div>
            <div class="watermark">
              <p class="big">Activate Windows</p>
              <p>Go to Settings to activate Windows.</p>
            </div>
          </div>
        </section>
      </div>
    </div>
  </div>
</body>
</html>
```
FILE: styles.css
```css
* {
  box-sizing: border-box;
}
body {
  margin: 0;
  background: #2a2e33;
  color: #e6e6e6;
  font-family: "Open Sans", "Noto Sans", sans-serif;
  font-size: 17px;
}
h2, p, ul {
  margin: 0;
  padding: 0;
  list-style: none;
}
button {
  display: flex;
  align-items: center;
  justify-content: center;
  padding: 0;
  border: 0;
  background: none;
  color: inherit;
  font: inherit;
}
svg {
  flex: none;
}
.sprite {
  position: absolute;
  width: 0;
  height: 0;
}
.app {
  display: grid;
  grid-template-columns: minmax(0, 909fr) minmax(0, 1635fr);
  gap: 6px;
  height: 100vh;
}
.side, .main, .outline, .graph {
  display: flex;
  flex-direction: column;
  min-width: 0;
  min-height: 0;
}

/* panel title */
.titlebar {
  display: flex;
  align-items: center;
  height: 29px;
  flex: none;
  border-top: 1px solid #3a3d42;
  border-right: 1px solid #3a3d42;
  padding-right: 4px;
}
.titlebar h2 {
  padding-bottom: 2px;
  font-size: 17px;
  font-weight: 400;
  line-height: 26px;
}
.titlebar button {
  width: 25px;
  height: 24px;
}
.dots {
  flex: 1;
  height: 9px;
  margin: 0 6px;
  background-image: radial-gradient(circle at 1px 1px, #454a50 1px, transparent 1px), radial-gradient(circle at 4px 4px, #454a50 1px, transparent 1px);
  background-size: 6px 6px;
}
.grip {
  width: 9px;
  height: 26px;
  flex: none;
  background-image: radial-gradient(circle at 1px 1px, #4c4c50 1px, transparent 1px), radial-gradient(circle at 4px 4px, #4c4c50 1px, transparent 1px);
  background-size: 6px 6px;
}

/* outline */
.outline {
  flex: 1;
}
.tools, .search {
  display: flex;
  align-items: center;
  background: #2d2d2f;
}
.tools {
  height: 40px;
  padding-left: 7px;
}
.tools button {
  width: 33px;
  height: 33px;
}
.tools .grip {
  margin-right: 8px;
}
.tools .sort-az {
  background: #575757;
}
.az-a {
  fill: #ddd;
  font-size: 19px;
}
.az-z {
  fill: #ddd;
  font-size: 16px;
}
.tools .overflow, .search .overflow {
  width: 16px;
  padding-top: 16px;
}
.search {
  height: 39px;
  padding-left: 18px;
}
.search .grip {
  margin-right: 10px;
}
select {
  appearance: none;
  height: 33px;
  border: 2px solid #3a3a3c;
  border-radius: 0;
  padding: 0 4px;
  color: #e6e6e6;
  font: inherit;
  background: url("data:image/svg+xml,%3Csvg xmlns='http://www.w3.org/2000/svg' width='22' height='29'%3E%3Cpath d='M0 0h22v29H0z' fill='%23333337'/%3E%3Cpath d='M6 12h11l-5 6z' fill='%23999'/%3E%3C/svg%3E") right center no-repeat #212121;
}
.search select {
  width: 150px;
}
.search input {
  width: 134px;
  height: 33px;
  margin-left: 1px;
  border: 2px solid #3a3a3c;
  padding: 0 4px;
  background: #212121;
  color: #e6e6e6;
  font: inherit;
}
.search input::placeholder {
  color: #6c6c6c;
}
.search button {
  width: 33px;
}
.tree-box {
  display: flex;
  flex: 1;
  min-height: 0;
  background: #212121;
}
.tree {
  flex: 1;
  padding: 1px 0 0 44px;
  font-family: "DejaVu Sans Condensed", "Noto Sans", sans-serif;
  font-size: 16px;
  overflow: hidden;
}
.tree ul {
  margin-left: 40px;
}
.tree li {
  background: repeating-linear-gradient(#aaa 0 1px, transparent 1px 2px) 7px 0 / 1px 100% no-repeat;
}
.tree li:last-child {
  background-size: 1px 12px;
}
.row {
  display: flex;
  align-items: center;
  height: 24px;
  background: repeating-linear-gradient(to right, #aaa 0 1px, transparent 1px 2px) 8px 12px / 21px 1px no-repeat;
}
.row.leaf {
  padding-left: 14px;
}
.toggle {
  width: 14px;
  height: 14px;
  border: 2px solid #c8c8c8;
  background: linear-gradient(#fff, #fff) center / 8px 1px no-repeat #212121;
}
.toggle.plus {
  background: linear-gradient(#fff, #fff) center / 8px 1px no-repeat, linear-gradient(#fff, #fff) center / 1px 8px no-repeat, #212121;
}
.check {
  width: 12px;
  height: 13px;
  margin: 8px 2px 0 15px;
}
.icon {
  width: 21px;
  height: 21px;
}
.row span {
  margin-left: 6px;
  padding: 0 3px 0 2px;
  line-height: 23px;
  white-space: nowrap;
}
.row.bold {
  font-weight: 700;
  color: #fff;
}
.row.selected span {
  background: #f0f0f0;
  color: #222;
}
.t0 {
  font: 700 11px "Liberation Sans", sans-serif;
  fill: #fff;
}
.scrollbar {
  display: flex;
  justify-content: center;
  width: 26px;
  background: #f0f0f0;
}
.thumb {
  width: 3px;
  height: 70%;
  margin-top: 128px;
  border-radius: 2px;
  background: #858585;
}

/* details */
.details {
  border-top: 6px solid #2a2e33;
  padding-bottom: 23px;
  background: #212121;
}
.details .titlebar {
  background: #2a2e33;
}
.props {
  width: 100%;
  padding-right: 2px;
  table-layout: fixed;
  border-collapse: collapse;
  font-size: 16px;
}
.c-fold {
  width: 12px;
}
.c-name {
  width: 191px;
}
.props td, .props th {
  height: 27px;
  padding: 0 4px;
  border: 1px solid #999;
  text-align: left;
  line-height: 20px;
  white-space: nowrap;
}
.props .fold {
  padding: 0;
  border-width: 0 1px 0 0;
}
.fold button {
  width: 9px;
  height: 13px;
  border: 1px solid #aaa;
  border-left: 0;
  background: linear-gradient(#ccc, #ccc) left center / 6px 1px no-repeat;
}
.props .ro {
  background: #475a65;
}
label {
  display: flex;
  align-items: center;
}
.props input {
  appearance: none;
  width: 19px;
  height: 19px;
  margin: 0 6px 0 0;
  border: 1px solid #aaa;
  background: #fff;
}

/* graphics toolbar */
.toolbar, .player {
  display: flex;
  align-items: center;
  background: #2d2d2f;
}
.toolbar {
  height: 38px;
  flex: none;
  padding: 0 4px 0 14px;
}
.toolbar .grip {
  margin-right: 9px;
}
.toolbar button, .player button {
  width: 33px;
  height: 33px;
  flex: none;
}
.toolbar .on, .player .on {
  border: 2px solid #3a8ee6;
  background: #242426;
}
.toolbar .wide {
  width: 50px;
  gap: 8px;
}
.dim {
  opacity: 0.8;
}
.sep {
  width: 1px;
  height: 30px;
  margin: 0 4px;
  flex: none;
  background: #48484c;
}
.toolbar .label {
  width: 61px;
  padding-left: 7px;
  white-space: nowrap;
}
.toolbar .empty {
  width: 90px;
  padding-left: 12px;
}
.toolbar .text {
  width: 118px;
  justify-content: flex-start;
  gap: 4px;
  padding-left: 5px;
  white-space: nowrap;
}
.toolbar .mode {
  width: 100px;
}
.toolbar .clip {
  width: 130px;
}
.toolbar .ext {
  width: 106px;
}
.toolbar .more, .player .more {
  width: 11px;
  margin-left: auto;
}
.tiny {
  font: 700 8px "Liberation Sans", sans-serif;
  fill: #ccc;
}
.tiny.dark {
  fill: #777;
}

/* viewport */
.viewport {
  position: relative;
  flex: 1;
  min-height: 0;
  background: radial-gradient(ellipse farthest-corner, #616161, #222 100%);
}
.scene {
  position: absolute;
  inset: 0;
  width: 100%;
  height: 100%;
}
.scene text {
  fill: #fff;
  font-size: 18px;
}
.scene .ruler text {
  fill: #d8d8d8;
  text-anchor: middle;
}
.scene .axis text {
  font-size: 17px;
  text-anchor: middle;
}
.scene .axis .ax-y { fill: #0c7c0c; }
.scene .axis .ax-x { fill: #d01010; }
.scene .axis .ax-z { fill: #1010d0; }
.wire {
  fill: none;
  stroke: #111;
  stroke-width: 2;
}
.beam {
  fill: none;
  stroke-width: 7;
}
.b9 { stroke: #ff0000; background: #ff0000; }
.b8 { stroke: #ffb000; background: #ffb000; }
.b7 { stroke: #ffff00; background: #ffff00; }
.b6 { stroke: #b0ff00; background: #b0ff00; }
.b5 { stroke: #00ff00; background: #00ff00; }
.b4 { stroke: #00ffb0; background: #00ffb0; }
.b3 { stroke: #00ffff; background: #00ffff; }
.b2 { stroke: #00b0ff; background: #00b0ff; }
.b1 { stroke: #0000ff; background: #0000ff; }
.info {
  position: relative;
  padding: 24px 0 0 25px;
  color: #d8d8d8;
  font-size: 18px;
  line-height: 26px;
}
.info strong {
  display: block;
}
.legend {
  display: flex;
  align-items: flex-end;
  gap: 14px;
  margin-top: 20px;
}
.bands {
  display: grid;
  grid-auto-rows: 1fr;
  gap: 1px;
  width: 28px;
  height: 258px;
  margin-bottom: 11px;
  border: 2px solid #ddd;
  background: #ddd;
}
.legend ul {
  display: flex;
  flex-direction: column;
  justify-content: space-between;
  height: 284px;
}
.legend li {
  line-height: 28px;
}
.brand {
  position: absolute;
  top: 14px;
  right: 8px;
  width: 166px;
  color: #fff;
}
.name {
  display: flex;
  justify-content: flex-end;
  align-items: baseline;
  font-size: 52px;
  font-weight: 700;
  line-height: 40px;
}
.version {
  padding: 10px 0 4px;
  border-bottom: 3px solid #b0b0b0;
  text-align: right;
  font-size: 26px;
  font-weight: 700;
  line-height: 30px;
}
.edition {
  padding-top: 6px;
  text-align: center;
  font-size: 28px;
  font-weight: 700;
  line-height: 32px;
}

/* bottom panels */
.bottom {
  display: grid;
  grid-template-columns: minmax(0, 814fr) minmax(0, 813fr);
  gap: 8px;
  height: 162px;
  margin-top: 7px;
}
.bottom h2 {
  padding-left: 7px;
  font-size: 16px;
}
.tabular {
  background: #212121;
}
.bottom .titlebar {
  background: #2a2e33;
  border-left: 1px solid #3a3d42;
}
.data {
  border-collapse: collapse;
  font-size: 16px;
}
.data th, .data td {
  height: 23px;
  padding: 0 4px;
  border: 1px solid #b8b8b8;
  background: #434343;
  font-weight: 400;
  text-align: left;
  line-height: 20px;
}
.data th {
  background: #5f5f5f;
}
.data .n {
  width: 22px;
}
.data .m {
  width: 58px;
  color: #111;
}
.data .v {
  width: 159px;
  height: 26px;
  color: #b00808;
}
.data input {
  appearance: none;
  width: 22px;
  height: 22px;
  margin: 0 6px 0 0;
  background: url("data:image/svg+xml,%3Csvg xmlns='http://www.w3.org/2000/svg' width='22' height='22'%3E%3Cpath d='M6 10l4 5 7-9' fill='none' stroke='%23000' stroke-width='3'/%3E%3C/svg%3E") #fff;
}
.player {
  height: 41px;
  flex: none;
  padding: 0 4px 0 14px;
}
.player .label {
  width: 106px;
  padding-left: 16px;
}
.player select {
  width: 150px;
}
.timeline {
  position: relative;
  flex: 1;
  margin-bottom: 4px;
  padding: 30px 33px 0 143px;
  border-bottom: 1px solid #999;
  background: #737373;
}
.track {
  height: 6px;
  border: 2px solid #111;
  background: #fff;
}
.watermark {
  position: absolute;
  left: 362px;
  top: 13px;
  color: #9c9c9c;
  font-size: 21px;
  line-height: 32px;
  white-space: nowrap;
}
.watermark .big {
  font-size: 28px;
  line-height: 40px;
}
```
